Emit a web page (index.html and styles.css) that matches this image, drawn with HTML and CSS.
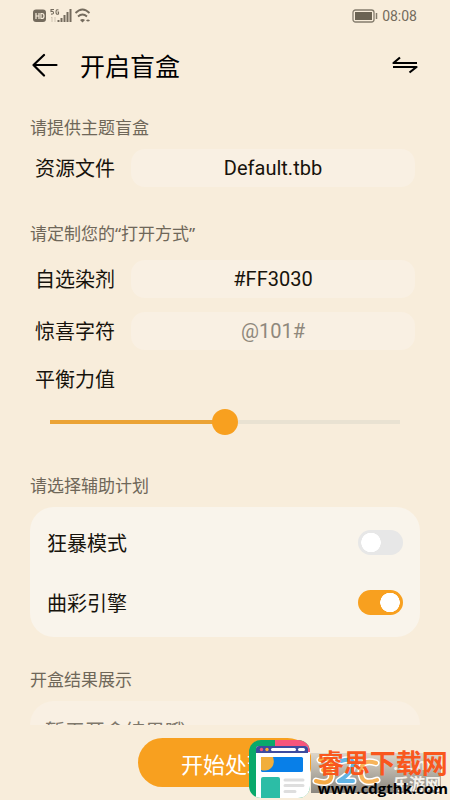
FILE: index.html
```html
<!DOCTYPE html>
<html lang="zh-CN">
<head>
<meta charset="utf-8">
<meta name="viewport" content="width=device-width, initial-scale=1">
<title>开启盲盒</title>
<link rel="stylesheet" href="styles.css">
</head>
<body>
<div class="app">
  <div class="status">
    <svg class="status-left" width="60" height="16" viewBox="0 0 60 16" aria-hidden="true">
      <rect x="0" y="1.500" width="13" height="12.500" rx="3" fill="#746b5d"/>
      <path d="M3 5v6M6 5v6M3 8h3M8 5.500v5h1q2 0 2-2.500t-2-2.500z" fill="none" stroke="#f9eedc" stroke-width="1.200"/>
      <path d="M21 1.500h-3v2q2.500-.5 2.500 1.200T18 6M25.500 2q-2.500-1-2.500 2t2.500 2V4h-1" fill="none" stroke="#746b5d" stroke-width="1.100"/>
      <path d="M19 9v5M18 10l1-1M22 9v5" fill="none" stroke="#cfc4b2" stroke-width="1"/>
      <path d="M25.500 14v-2M28.500 14v-4M31.500 14V7M34.500 14V4M37.500 14V1" fill="none" stroke="#746b5d" stroke-width="2"/>
      <path d="M42.500 5q7-7 14 0M45 8.500q4.500-4 9 0" fill="none" stroke="#746b5d" stroke-width="1.800"/>
      <path d="M47 12q2.500-2 5 0l-2.500 2.500z" fill="#746b5d"/>
      <path d="M53 12.500q2-2 4 0-2 2-4 0z" fill="#746b5d"/>
    </svg>
    <div class="status-right">
      <svg width="26" height="14" viewBox="0 0 26 14" aria-hidden="true">
        <rect x="1" y="1" width="21" height="12" rx="2.500" fill="none" stroke="#847c6d" stroke-width="1.300"/>
        <rect x="3" y="3" width="17" height="8" fill="#6b6353"/>
        <path d="M24.500 4v6" stroke="#847c6d" stroke-width="1.500"/>
      </svg>
      <span class="clock">08:08</span>
    </div>
  </div>

  <header class="header">
    <button class="icon-button" type="button" aria-label="返回">
      <svg width="26" height="24" viewBox="0 0 26 24"><path d="M24.500 12H1.500M12 2L1.500 12 12 22.500" fill="none" stroke="#000" stroke-width="2.200" stroke-linecap="round" stroke-linejoin="round"/></svg>
    </button>
    <h1 class="title">开启盲盒</h1>
    <button class="icon-button" type="button" aria-label="切换">
      <svg width="26" height="18" viewBox="0 0 26 18"><path d="M8 1.500L1.500 7H25M1 11h23.500L17.500 16.500" fill="none" stroke="#000" stroke-width="2.200" stroke-linejoin="round"/></svg>
    </button>
  </header>

  <main class="content">
    <h2 class="caption">请提供主题盲盒</h2>
    <div class="row row-file">
      <label class="label" for="file">资源文件</label>
      <input class="field" id="file" type="text" value="Default.tbb">
    </div>

    <h2 class="caption caption-next">请定制您的“打开方式”</h2>
    <div class="fields">
      <div class="row">
        <label class="label" for="color">自选染剂</label>
        <input class="field" id="color" type="text" value="#FF3030">
      </div>
      <div class="row">
        <label class="label" for="chars">惊喜字符</label>
        <input class="field" id="chars" type="text" placeholder="@101#">
      </div>
    </div>
    <div class="balance">
      <label class="label" for="balance">平衡力值</label>
      <input class="slider" id="balance" type="range" min="0" max="100" value="50">
    </div>

    <h2 class="caption">请选择辅助计划</h2>
    <div class="card">
      <div class="option">
        <label for="rage">狂暴模式</label>
        <input class="switch" id="rage" type="checkbox" role="switch">
      </div>
      <div class="option">
        <label for="engine">曲彩引擎</label>
        <input class="switch" id="engine" type="checkbox" role="switch" checked>
      </div>
    </div>

    <h2 class="caption caption-result">开盒结果展示</h2>
    <div class="result">暂无开盒结果哦</div>
  </main>

  <footer class="footer">
    <button class="start" type="button">开始处理</button>
  </footer>

  <div class="watermark">
    <svg class="logo" width="62" height="60" viewBox="0 0 62 60" aria-hidden="true">
      <defs><clipPath id="tile"><rect width="61" height="58" rx="12"/></clipPath></defs>
      <g clip-path="url(#tile)">
        <rect width="62" height="60" fill="#0aa96b"/>
        <path d="M26 0h36v20H26z" fill="#f7557c"/>
        <path d="M54 12h8v48h-8z" fill="#fff"/>
        <rect x="7" y="6" width="52" height="54" rx="3" fill="#fff"/>
        <path d="M7 12V9q0-3 3-3h46q3 0 3 3v4H7z" fill="#3d4b9f"/>
        <circle cx="12.500" cy="9.500" r="1.700" fill="#f7557c"/>
        <circle cx="18" cy="9.500" r="1.700" fill="#f6ad35"/>
        <rect x="22" y="8" width="25" height="3" rx="1.500" fill="#fff"/>
        <rect x="49" y="8" width="7" height="3" rx="1.500" fill="#fff"/>
        <rect x="12" y="17" width="42" height="15" rx="1.500" fill="#087fe8"/>
        <path d="M12 17h12q2 6-1 10-4 5-11 3z" fill="#f1ae3c"/>
        <rect x="12" y="37" width="19" height="24" rx="2" fill="#2cbda6"/>
        <path d="M36 40h18M36 45.500h18M36 51.500h10" stroke="#dedede" stroke-width="3" stroke-linecap="round"/>
      </g>
    </svg>
    <div class="brand">
      <div class="under" aria-hidden="true">
        <svg class="under-mark" width="72" height="36" viewBox="0 0 72 36">
          <g fill="none" stroke-linecap="round" stroke-linejoin="round">
            <path d="M9 7q12-4 12 3t-9 7q10 1 8 8T5 28M30 8q13-4 12 4T28 28h14M65 10q-15-5-15 9t16 8" stroke="#fff" stroke-width="7"/>
            <path d="M9 7q12-4 12 3t-9 7q10 1 8 8T5 28" stroke="#f6aa45" stroke-width="4"/>
            <path d="M30 8q13-4 12 4T28 28h14" stroke="#62b5e5" stroke-width="4"/>
            <path d="M65 10q-15-5-15 9t16 8" stroke="#f6b45b" stroke-width="4"/>
          </g>
        </svg>
        <span class="under-text">.com<br>乐游网</span>
      </div>
      <div class="site">睿思下载网</div>
      <div class="url">www.cdgthk.com</div>
    </div>
  </div>
</div>
</body>
</html>
```
FILE: styles.css
```css
* {
  box-sizing: border-box;
}

body {
  margin: 0;
  background: #f8eddb;
  color: #17130c;
  font-family: "Noto Sans CJK SC", sans-serif;
}

button,
input {
  margin: 0;
  border: 0;
  font: inherit;
  color: inherit;
}

.app {
  position: relative;
  display: flex;
  flex-direction: column;
  height: 100vh;
  overflow: hidden;
}

.status {
  display: flex;
  flex: none;
  justify-content: space-between;
  align-items: center;
  height: 32px;
  padding: 0 33px;
}

.status-right {
  display: flex;
  align-items: center;
  gap: 4px;
}

.clock {
  color: #746b5d;
  font-family: Roboto, sans-serif;
  font-size: 14px;
  line-height: 16px;
}

.header {
  display: flex;
  flex: none;
  align-items: center;
  height: 66px;
  padding: 0 32px;
}

.icon-button {
  display: flex;
  padding: 0;
  background: none;
}

.title {
  flex: 1;
  margin: 0;
  padding-left: 22px;
  color: #000;
  font-size: 25px;
  font-weight: 400;
  line-height: 36px;
}

.content {
  flex: 1;
  min-height: 0;
  padding: 17px 30px 0;
  overflow: hidden;
}

.caption {
  margin: 0;
  color: #6f6759;
  font-family: "Noto Sans", "Noto Sans CJK SC", sans-serif;
  font-size: 17px;
  font-weight: 400;
  line-height: 26px;
}

.caption-next {
  margin-top: 34px;
}

.row {
  display: flex;
  align-items: center;
  gap: 16px;
  padding: 0 5px;
}

.row-file {
  margin-top: 8px;
}

.fields {
  display: flex;
  flex-direction: column;
  gap: 14px;
  margin-top: 13px;
}

.label {
  font-size: 20px;
  line-height: 30px;
}

.field {
  flex: 1;
  min-width: 0;
  height: 38px;
  padding: 0 16px;
  border-radius: 14px;
  background: #f9f0e3;
  font-family: Roboto, "Noto Sans CJK SC", sans-serif;
  font-size: 20px;
  text-align: center;
}

.field::placeholder {
  color: #8f887c;
  opacity: 1;
}

.balance {
  display: flex;
  flex-direction: column;
  gap: 14px;
  margin: 14px 0 37px;
  padding: 0 5px;
}

.slider {
  appearance: none;
  height: 28px;
  margin: 0 15px;
  background: linear-gradient(#eba335, #eba335) left center / 50% 4px no-repeat,
    linear-gradient(#e9e2d2, #e9e2d2) center / 100% 4px no-repeat;
}

.slider::-webkit-slider-thumb {
  appearance: none;
  width: 26px;
  height: 26px;
  border-radius: 50%;
  background: #f8a01f;
}

.card {
  margin-top: 8px;
  padding: 5px 17px;
  border-radius: 24px;
  background: #f9f4eb;
}

.option {
  display: flex;
  justify-content: space-between;
  align-items: center;
  height: 60px;
  font-size: 20px;
}

.switch {
  appearance: none;
  width: 45px;
  height: 25px;
  border-radius: 13px;
  background: radial-gradient(circle 10px at 13px 50%, #fff 95%, transparent) #e7e7e7;
}

.switch:checked {
  background: radial-gradient(circle 10px at 32px 50%, #fff 95%, transparent) #f8a01f;
}

.caption-result {
  margin-top: 30px;
}

.result {
  margin-top: 8px;
  padding: 15px;
  border-radius: 24px;
  background: #f9f0e3;
  color: #7f786b;
  font-size: 20px;
  line-height: 30px;
}

.footer {
  display: flex;
  flex: none;
  justify-content: center;
  padding: 13px 0;
}

.start {
  width: 174px;
  height: 49px;
  border-radius: 25px;
  background: #f8a01f;
  color: #fff;
  font-size: 22px;
}

.watermark {
  position: absolute;
  right: 2px;
  bottom: 0;
  display: flex;
  align-items: flex-end;
}

.brand {
  position: relative;
  padding: 0 0 3px 7px;
}

.under {
  position: absolute;
  inset: 8px 7px 7px 0;
  display: flex;
  justify-content: space-between;
  background: linear-gradient(#ddd6ca, #8b877f);
}

.under-text {
  color: #f5f2ec;
  font-size: 16px;
  font-weight: 700;
  line-height: 20px;
}

.site {
  position: relative;
  color: #f9571d;
  font-size: 26px;
  font-weight: 700;
  line-height: 34px;
}

.url {
  position: relative;
  color: #000;
  font-family: "Open Sans", sans-serif;
  font-size: 15px;
  font-weight: 700;
  line-height: 18px;
}
```
